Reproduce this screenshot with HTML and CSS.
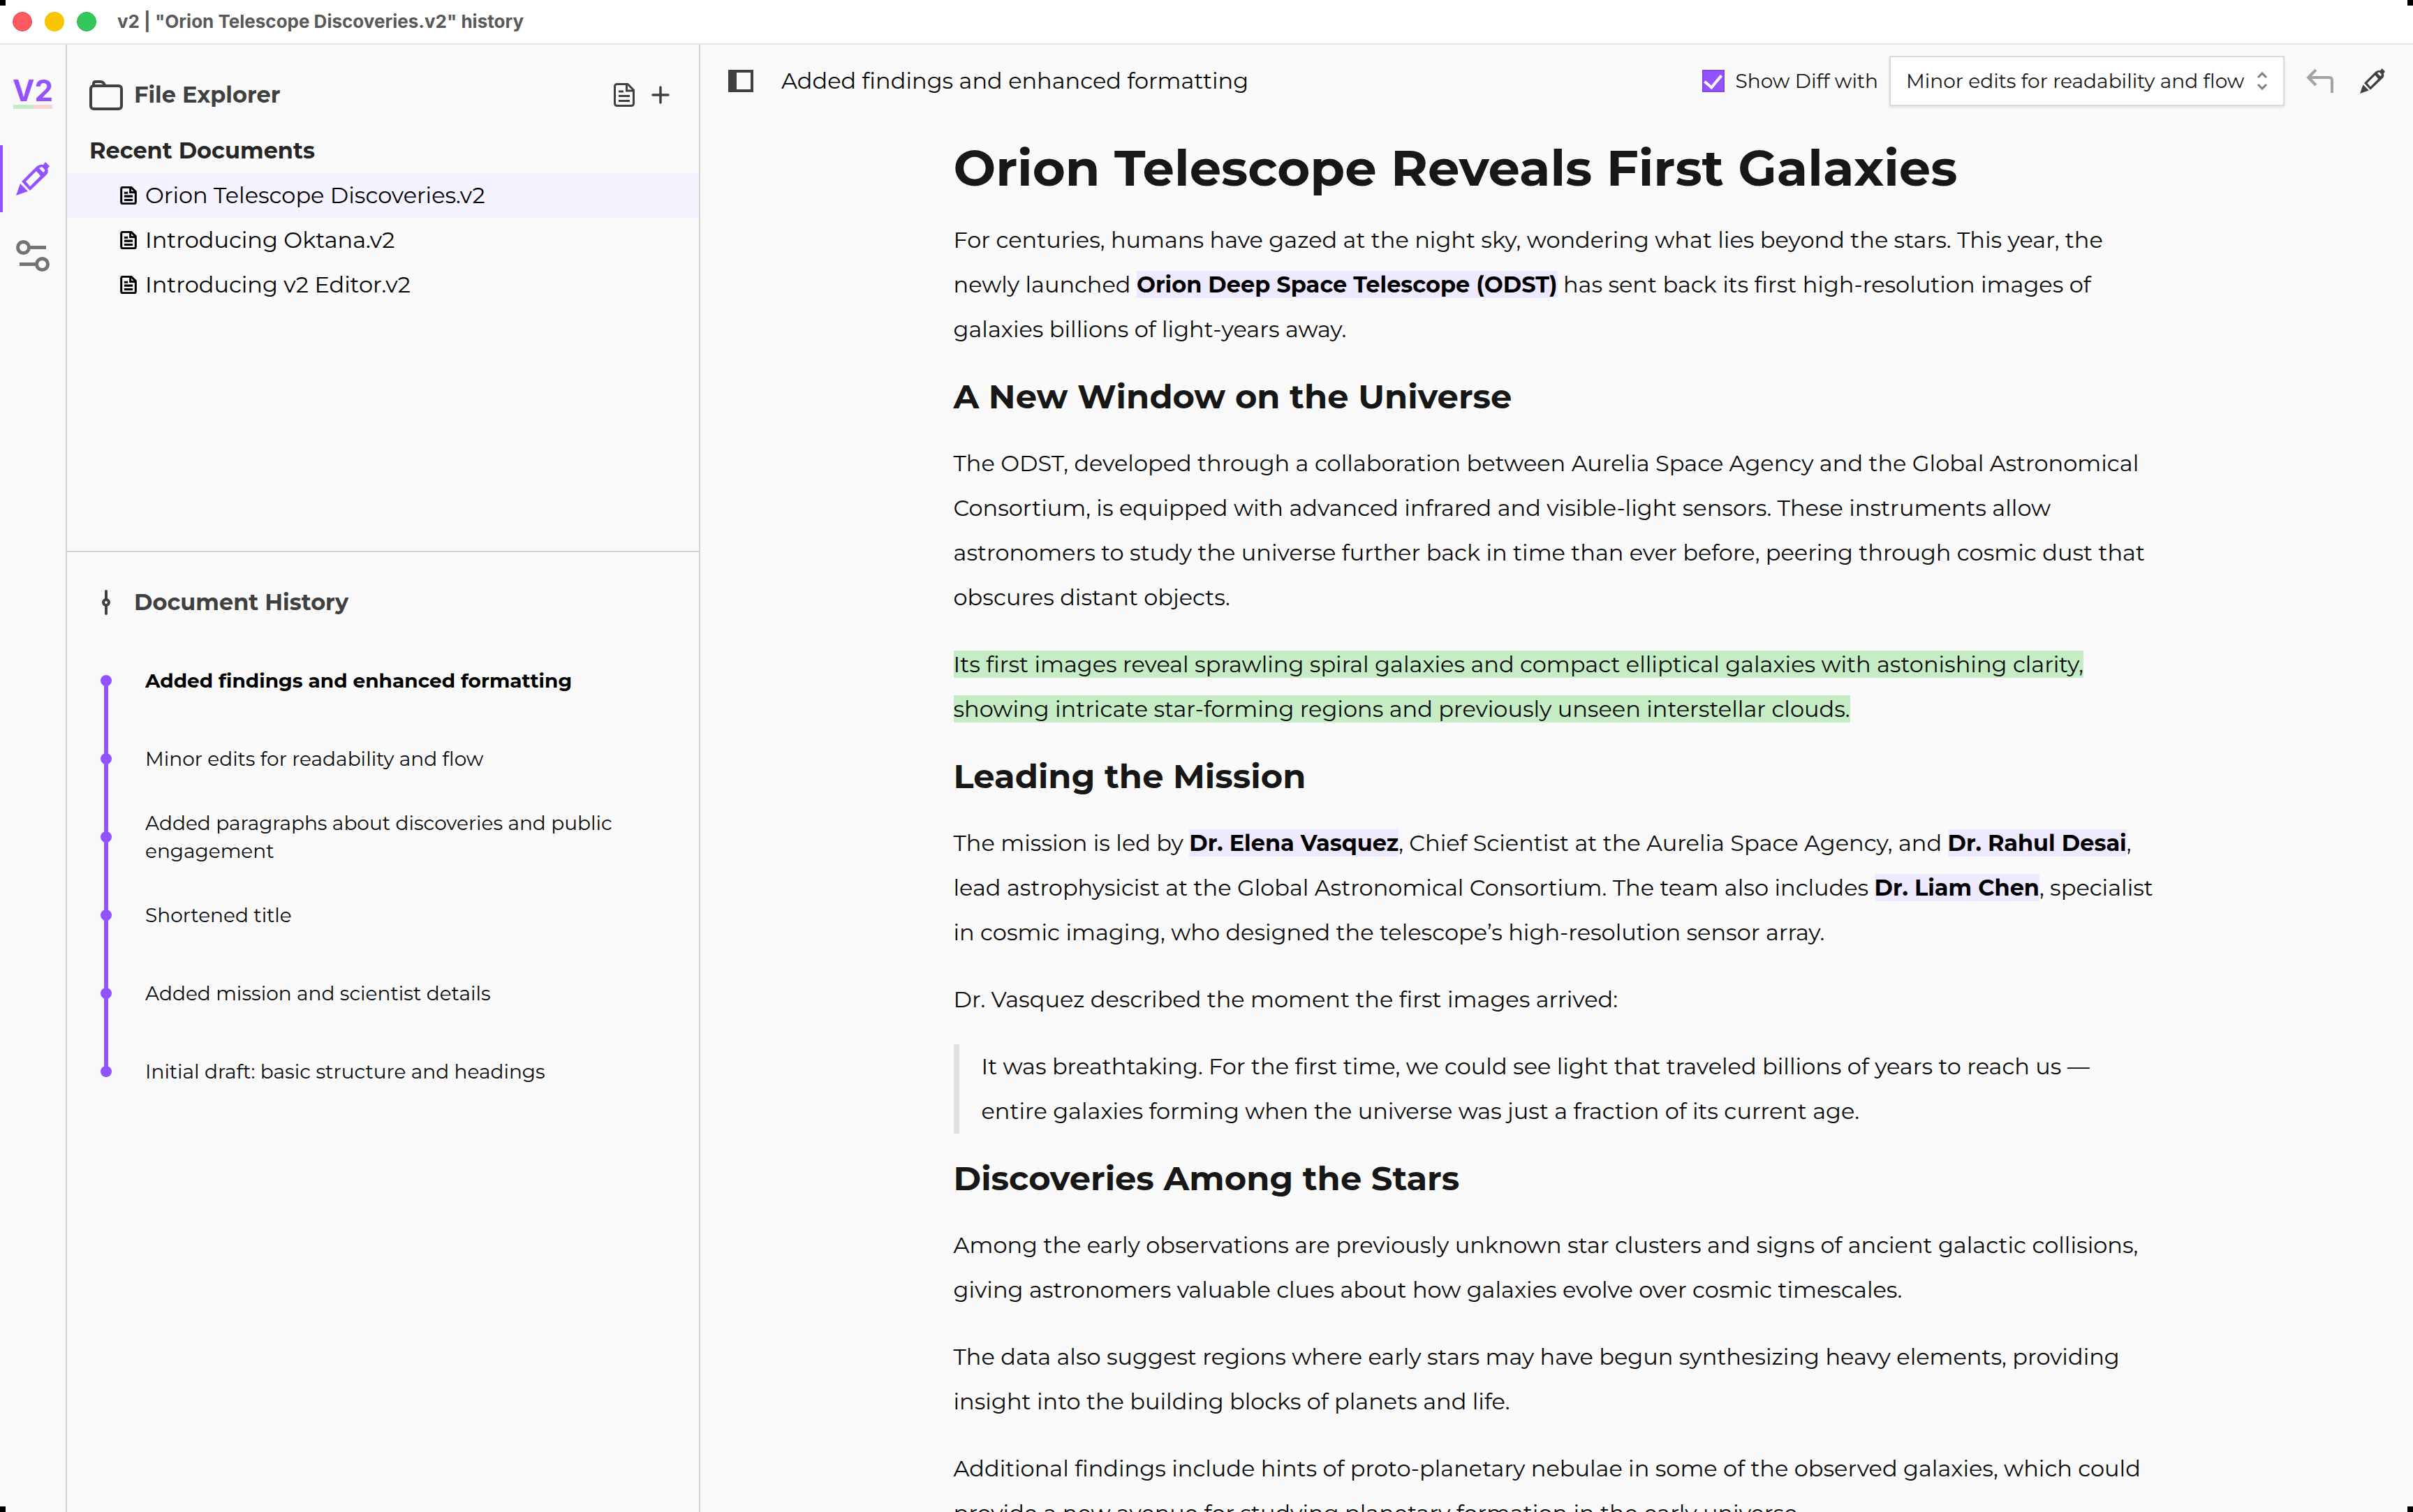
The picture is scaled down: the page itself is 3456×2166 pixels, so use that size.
FILE: index.html
```html
<!DOCTYPE html>
<html lang="en">
<head>
<meta charset="utf-8">
<title>v2 | "Orion Telescope Discoveries.v2" history</title>
<link rel="stylesheet" href="styles.css">
</head>
<body>
<svg class="sprite" aria-hidden="true">
  <symbol id="pen" viewBox="0 0 48 48">
    <path fill="currentColor" d="M0 48 6 31 17 42Z"/>
    <path fill="currentColor" fill-rule="evenodd" d="M8 28 30 6Q35 3 39 4L42 0 48 6 45 10Q47 14 44 18L20 41ZM14 28 20 35 35 20 29 13ZM33 9 39 15Q42 13 41 11L37 7Z"/>
  </symbol>
  <symbol id="doc" viewBox="0 0 30 34">
    <path fill="none" stroke="currentColor" d="M5 1.500H20L28.500 10V29Q28.500 32.500 25 32.500H5Q1.500 32.500 1.500 29V5Q1.500 1.500 5 1.500ZM18.500 2V11H28M7 12H14M7 18.500H23M7 25.500H23"/>
  </symbol>
</svg>
<div class="window">
  <header class="titlebar">
    <span class="light light-close"></span>
    <span class="light light-min"></span>
    <span class="light light-max"></span>
    <span class="window-title">v2 | "Orion Telescope Discoveries.v2" history</span>
  </header>
  <div class="workspace">
    <nav class="rail" aria-label="Main">
      <div class="logo"><span class="logo-text">V2</span><span class="logo-bar"></span></div>
      <button class="rail-btn active" aria-label="Editor"><svg class="icon-48"><use href="#pen"/></svg></button>
      <button class="rail-btn" aria-label="Settings"><svg class="icon-48" viewBox="0 0 48 48" fill="none" stroke="currentColor" stroke-width="5"><circle cx="10.500" cy="10.500" r="8"/><path d="M18 10.500H43M5 34.500H30"/><circle cx="37.500" cy="34.500" r="8"/></svg></button>
    </nav>
    <aside class="sidebar">
      <section class="panel files">
        <div class="panel-head">
          <svg class="icon-48" viewBox="0 0 48 48" fill="none" stroke="currentColor" stroke-width="4"><rect x="2" y="11" width="44" height="33" rx="4"/><path d="M6 11V8Q6 5 9 5H16Q20 5 22 10"/></svg>
          <h2 class="panel-title">File Explorer</h2>
          <button class="icon-btn" aria-label="New document"><svg class="icon-doc"><use href="#doc"/></svg></button>
          <button class="icon-btn" aria-label="Add"><svg class="icon-plus" viewBox="0 0 26 26" stroke="currentColor" stroke-width="3.500" stroke-linecap="round"><path d="M13 2V24M2 13H24"/></svg></button>
        </div>
        <h3 class="recent-title">Recent Documents</h3>
        <ul class="file-list">
          <li><a class="file selected" href="#orion"><svg class="icon-file"><use href="#doc"/></svg>Orion Telescope Discoveries.v2</a></li>
          <li><a class="file" href="#oktana"><svg class="icon-file"><use href="#doc"/></svg>Introducing Oktana.v2</a></li>
          <li><a class="file" href="#editor"><svg class="icon-file"><use href="#doc"/></svg>Introducing v2 Editor.v2</a></li>
        </ul>
      </section>
      <section class="panel history">
        <div class="panel-head">
          <svg class="icon-48" viewBox="0 0 48 48" fill="none" stroke="currentColor" stroke-width="4" stroke-linecap="round"><path d="M24 8V19M24 29V40"/><circle cx="24" cy="24" r="4"/></svg>
          <h2 class="panel-title">Document History</h2>
        </div>
        <ol class="timeline">
          <li class="commit current"><a href="#c6">Added findings and enhanced formatting</a></li>
          <li class="commit"><a href="#c5">Minor edits for readability and flow</a></li>
          <li class="commit"><a href="#c4">Added paragraphs about discoveries and public engagement</a></li>
          <li class="commit"><a href="#c3">Shortened title</a></li>
          <li class="commit"><a href="#c2">Added mission and scientist details</a></li>
          <li class="commit"><a href="#c1">Initial draft: basic structure and headings</a></li>
        </ol>
      </section>
    </aside>
    <main class="main">
      <div class="toolbar">
        <button class="icon-btn" aria-label="Toggle sidebar"><svg class="icon-panel" viewBox="0 0 36 32"><path fill="currentColor" fill-rule="evenodd" d="M0 0H36V32H0ZM12 4V28H32V4Z"/></svg></button>
        <span class="commit-name">Added findings and enhanced formatting</span>
        <input class="check" type="checkbox" id="diff" checked>
        <label class="check-label" for="diff">Show Diff with</label>
        <div class="select-wrap">
          <select class="select" aria-label="Compare with version"><option>Minor edits for readability and flow</option></select>
          <svg class="chevrons" viewBox="0 0 16 26" fill="none" stroke="currentColor" stroke-width="3"><path d="M2 8 8 2 14 8M2 18 8 24 14 18"/></svg>
        </div>
        <button class="icon-btn undo" aria-label="Revert"><svg class="icon-undo" viewBox="0 0 40 36" fill="none" stroke="currentColor" stroke-width="4"><path d="M14 2 3 13 14 24M3 13H33Q37 13 37 17V35"/></svg></button>
        <button class="icon-btn edit" aria-label="Edit"><svg class="icon-36"><use href="#pen"/></svg></button>
      </div>
      <article class="doc">
        <h1>Orion Telescope Reveals First Galaxies</h1>
        <p>For centuries, humans have gazed at the night sky, wondering what lies beyond the stars. This year, the newly launched <strong>Orion Deep Space Telescope (ODST)</strong> has sent back its first high-resolution images of galaxies billions of light-years away.</p>
        <h2>A New Window on the Universe</h2>
        <p>The ODST, developed through a collaboration between Aurelia Space Agency and the Global Astronomical Consortium, is equipped with advanced infrared and visible-light sensors. These instruments allow astronomers to study the universe further back in time than ever before, peering through cosmic dust that obscures distant objects.</p>
        <p><ins>Its first images reveal sprawling spiral galaxies and compact elliptical galaxies with astonishing clarity, showing intricate star-forming regions and previously unseen interstellar clouds.</ins></p>
        <h2>Leading the Mission</h2>
        <p>The mission is led by <strong>Dr. Elena Vasquez</strong>, Chief Scientist at the Aurelia Space Agency, and <strong>Dr. Rahul Desai</strong>, lead astrophysicist at the Global Astronomical Consortium. The team also includes <strong>Dr. Liam Chen</strong>, specialist in cosmic imaging, who designed the telescope’s high-resolution sensor array.</p>
        <p>Dr. Vasquez described the moment the first images arrived:</p>
        <blockquote>It was breathtaking. For the first time, we could see light that traveled billions of years to reach us — entire galaxies forming when the universe was just a fraction of its current age.</blockquote>
        <h2>Discoveries Among the Stars</h2>
        <p>Among the early observations are previously unknown star clusters and signs of ancient galactic collisions, giving astronomers valuable clues about how galaxies evolve over cosmic timescales.</p>
        <p>The data also suggest regions where early stars may have begun synthesizing heavy elements, providing insight into the building blocks of planets and life.</p>
        <p>Additional findings include hints of proto-planetary nebulae in some of the observed galaxies, which could provide a new avenue for studying planetary formation in the early universe.</p>
      </article>
    </main>
  </div>
  <span class="corner top left"></span>
  <span class="corner top right"></span>
  <span class="corner bottom left"></span>
  <span class="corner bottom right"></span>
</div>
</body>
</html>
```

FILE: styles.css
```css
* { box-sizing: border-box; }

body, h1, h2, h3, p, ul, ol, blockquote { margin: 0; padding: 0; }

body {
  font-family: Montserrat, Inter, sans-serif;
  font-size: 32px;
  line-height: 64px;
  color: #0a0a0a;
  background: #fafafa;
}

ul, ol { list-style: none; }
a { color: inherit; text-decoration: none; }
button { padding: 0; border: 0; background: none; color: inherit; font: inherit; }
svg { display: block; flex: none; }
.sprite { position: absolute; width: 0; height: 0; }

.window {
  position: relative;
  display: flex;
  flex-direction: column;
  height: 100vh;
  overflow: hidden;
}

.corner { position: absolute; width: 8px; height: 8px; background: #000; }
.top { top: 0; }
.bottom { bottom: 0; }
.left { left: 0; }
.right { right: 0; }

/* Title bar */
.titlebar {
  flex: none;
  display: flex;
  align-items: center;
  gap: 18px;
  height: 64px;
  padding-left: 18px;
  background: #fff;
  border-bottom: 2px solid #e5e5e5;
}
.light { width: 28px; height: 28px; border-radius: 50%; }
.light-close { background: #ff5a5f; border: 1px solid #e8474c; }
.light-min { background: #f9c400; }
.light-max { background: #34c759; border: 1px solid #1fb544; }
.window-title {
  padding-left: 12px;
  font-family: Inter, sans-serif;
  font-size: 26px;
  font-weight: 700;
  color: #595959;
}

.workspace { flex: 1; display: flex; min-height: 0; }

/* Icon rail */
.rail {
  flex: none;
  display: flex;
  flex-direction: column;
  gap: 16px;
  width: 96px;
  border-right: 2px solid #d4d4d8;
}
.logo {
  display: flex;
  flex-direction: column;
  align-items: center;
  height: 128px;
  padding-top: 48px;
}
.logo-text {
  font-family: Inter, sans-serif;
  font-size: 42px;
  font-weight: 700;
  line-height: 36px;
  color: #9352ff;
}
.logo-bar {
  width: 56px;
  height: 6px;
  margin-top: 2px;
  background: linear-gradient(90deg, #c5ecc5 50%, #fcd3d7 50%);
}
.rail-btn {
  display: flex;
  align-items: center;
  justify-content: center;
  height: 96px;
  color: #737373;
}
.rail-btn.active { color: #9352ff; box-shadow: inset 4px 0 #9352ff; }
.icon-48 { width: 48px; height: 48px; }
.icon-36 { width: 36px; height: 36px; }

/* Sidebar */
.sidebar {
  flex: none;
  display: flex;
  flex-direction: column;
  width: 907px;
  border-right: 2px solid #d4d4d4;
}
.panel { padding-top: 40px; }
.files { min-height: 727px; border-bottom: 2px solid #d4d4d8; }
.panel-head {
  display: flex;
  align-items: center;
  height: 64px;
  padding: 0 42px 0 32px;
  color: #404040;
}
.panel-title { flex: 1; padding-left: 16px; font-size: 32px; font-weight: 700; }
.panel-head .icon-btn + .icon-btn { margin-left: 24px; }
.icon-doc { width: 30px; height: 34px; stroke-width: 3px; }
.icon-plus { width: 26px; height: 26px; }
.recent-title { padding: 16px 32px 0; font-size: 32px; font-weight: 700; color: #262626; }
.file { display: flex; align-items: center; gap: 12px; padding-left: 76px; color: #000; }
.file.selected { background: #f5f3ff; }
.icon-file { width: 24px; height: 26px; stroke-width: 4px; }

.timeline { padding: 24px 32px 0; }
.commit {
  position: relative;
  display: flex;
  align-items: center;
  height: 112px;
  padding: 0 40px 0 80px;
  font-size: 28px;
  line-height: 40px;
}
.commit.current { font-weight: 700; color: #000; }
.commit::before {
  content: "";
  position: absolute;
  left: 16px;
  width: 16px;
  height: 16px;
  border-radius: 50%;
  background: #9352ff;
}
.commit:not(:last-child)::after {
  content: "";
  position: absolute;
  left: 21px;
  top: 50%;
  width: 6px;
  height: 100%;
  background: #9352ff;
}

/* Toolbar */
.main { flex: 1; min-width: 0; overflow: hidden; }
.toolbar {
  display: flex;
  align-items: center;
  height: 104px;
  padding: 0 40px;
  color: #404040;
}
.icon-panel { width: 36px; height: 32px; }
.commit-name { flex: 1; padding-left: 40px; color: #0a0a0a; }
.check {
  appearance: none;
  display: grid;
  place-items: center;
  width: 32px;
  height: 32px;
  margin: 0 16px 0 0;
  background: #9352ff;
  border: 2px solid #8644ee;
}
.check:checked::before {
  content: "";
  width: 11px;
  height: 20px;
  margin-bottom: 4px;
  border: solid #fff;
  border-width: 0 4px 4px 0;
  rotate: 40deg;
}
.check-label { font-size: 28px; color: #171717; }
.select-wrap { position: relative; margin-left: 16px; }
.select {
  appearance: none;
  display: block;
  width: 566px;
  height: 72px;
  padding: 0 48px 0 22px;
  font-family: inherit;
  font-size: 28px;
  color: #171717;
  background: #fff;
  border: 2px solid #d9d9d9;
  border-radius: 0;
  box-shadow: 0 2px 4px #0000001a;
}
.chevrons { position: absolute; right: 24px; top: 23px; width: 16px; height: 26px; color: #808080; }
.undo { margin-left: 31px; color: #a3a3a3; }
.edit { margin-left: 37px; }
.icon-undo { width: 40px; height: 36px; }

/* Document */
.doc {
  display: flex;
  flex-direction: column;
  gap: 32px;
  max-width: 1728px;
  margin: 0 auto;
  padding: 32px 0;
}
.doc h1 { font-size: 72px; line-height: 80px; font-weight: 700; color: #171717; }
.doc h2 { font-size: 48px; font-weight: 700; color: #171717; }
.doc strong { background: #ede9fe; color: #000; font-weight: 700; }
.doc ins { background: #c5ecc5; text-decoration: none; }
.doc blockquote { padding-left: 32px; border-left: 8px solid #e0e0e0; }
```
